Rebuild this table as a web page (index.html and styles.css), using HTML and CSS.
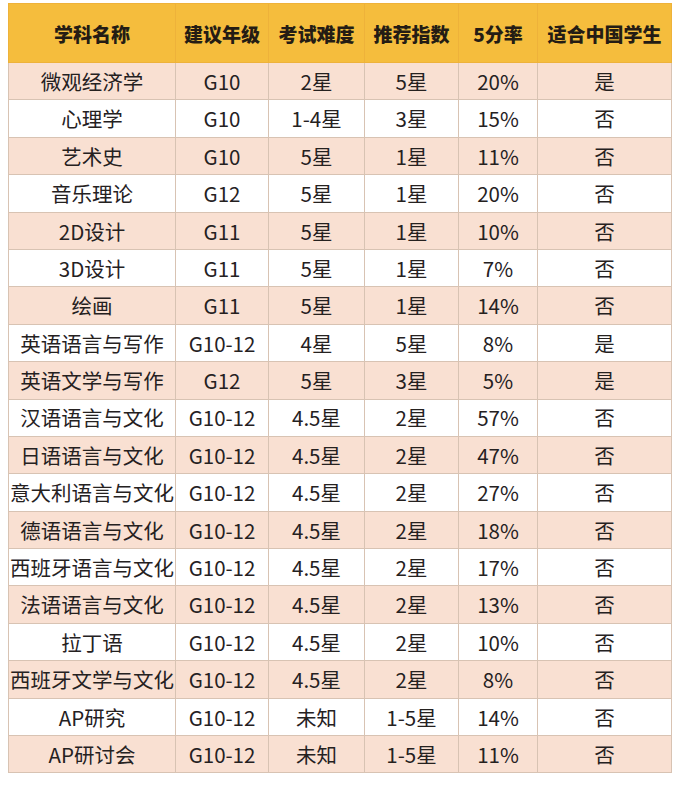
FILE: index.html
```html
<!DOCTYPE html>
<html lang="zh">
<head>
<meta charset="utf-8">
<link rel="stylesheet" href="styles.css">
</head>
<body>
<table class="grid">
<colgroup>
<col class="c1"><col class="c2"><col class="c3"><col class="c4"><col class="c5"><col class="c6">
</colgroup>
<thead>
<tr><th>学科名称</th><th>建议年级</th><th>考试难度</th><th>推荐指数</th><th>5分率</th><th>适合中国学生</th></tr>
</thead>
<tbody>
<tr><td>微观经济学</td><td>G10</td><td>2星</td><td>5星</td><td>20%</td><td>是</td></tr>
<tr><td>心理学</td><td>G10</td><td>1-4星</td><td>3星</td><td>15%</td><td>否</td></tr>
<tr><td>艺术史</td><td>G10</td><td>5星</td><td>1星</td><td>11%</td><td>否</td></tr>
<tr><td>音乐理论</td><td>G12</td><td>5星</td><td>1星</td><td>20%</td><td>否</td></tr>
<tr><td>2D设计</td><td>G11</td><td>5星</td><td>1星</td><td>10%</td><td>否</td></tr>
<tr><td>3D设计</td><td>G11</td><td>5星</td><td>1星</td><td>7%</td><td>否</td></tr>
<tr><td>绘画</td><td>G11</td><td>5星</td><td>1星</td><td>14%</td><td>否</td></tr>
<tr><td>英语语言与写作</td><td>G10-12</td><td>4星</td><td>5星</td><td>8%</td><td>是</td></tr>
<tr><td>英语文学与写作</td><td>G12</td><td>5星</td><td>3星</td><td>5%</td><td>是</td></tr>
<tr><td>汉语语言与文化</td><td>G10-12</td><td>4.5星</td><td>2星</td><td>57%</td><td>否</td></tr>
<tr><td>日语语言与文化</td><td>G10-12</td><td>4.5星</td><td>2星</td><td>47%</td><td>否</td></tr>
<tr><td>意大利语言与文化</td><td>G10-12</td><td>4.5星</td><td>2星</td><td>27%</td><td>否</td></tr>
<tr><td>德语语言与文化</td><td>G10-12</td><td>4.5星</td><td>2星</td><td>18%</td><td>否</td></tr>
<tr><td>西班牙语言与文化</td><td>G10-12</td><td>4.5星</td><td>2星</td><td>17%</td><td>否</td></tr>
<tr><td>法语语言与文化</td><td>G10-12</td><td>4.5星</td><td>2星</td><td>13%</td><td>否</td></tr>
<tr><td>拉丁语</td><td>G10-12</td><td>4.5星</td><td>2星</td><td>10%</td><td>否</td></tr>
<tr><td>西班牙文学与文化</td><td>G10-12</td><td>4.5星</td><td>2星</td><td>8%</td><td>否</td></tr>
<tr><td>AP研究</td><td>G10-12</td><td>未知</td><td>1-5星</td><td>14%</td><td>否</td></tr>
<tr><td>AP研讨会</td><td>G10-12</td><td>未知</td><td>1-5星</td><td>11%</td><td>否</td></tr>
</tbody>
</table>
</body>
</html>
```
FILE: styles.css
```css
html, body {
  margin: 0;
  background: #ffffff;
}
body {
  padding: 3px 0 0 8px;
  font-family: "Noto Sans CJK SC", "Noto Sans", sans-serif;
  color: #25211f;
}
.grid {
  border-collapse: collapse;
  table-layout: fixed;
  width: 663px;
}
.c1 { width: 167px; }
.c2 { width: 93px; }
.c3 { width: 96px; }
.c4 { width: 94px; }
.c5 { width: 79px; }
.c6 { width: 134px; }
.grid th, .grid td {
  border: 1px solid #d8c3b3;
  text-align: center;
  padding: 0;
  white-space: nowrap;
  overflow: hidden;
}
.grid th {
  background: #f5bd3d;
  height: 58px;
  font-size: 19px;
  font-weight: 900;
  color: #241c14;
  border-color: #eeb23a;
}
.grid td {
  height: 36.4px;
  font-size: 20.5px;
  line-height: 1;
  font-weight: 400;
}
.grid tbody tr:nth-child(odd) td {
  background: #f9e0d2;
}
.grid tbody tr:nth-child(even) td {
  background: #ffffff;
}
```
